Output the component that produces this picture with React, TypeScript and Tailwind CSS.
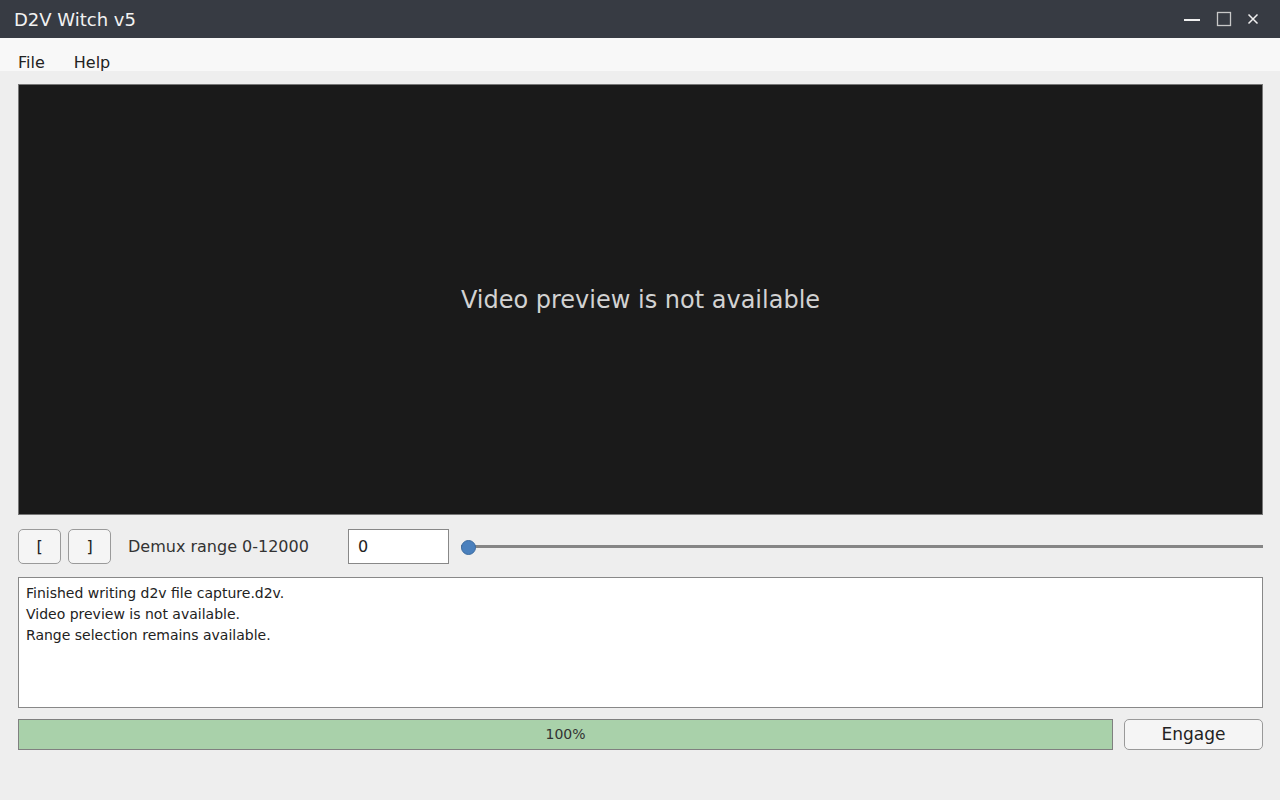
import React, { useState } from 'react';

const font = { fontFamily: '"DejaVu Sans", "Noto Sans", sans-serif' };

const TitleBar: React.FC = () => (
  <div className="h-[38px] bg-[#373b43] flex items-center justify-between pl-[14px] pr-[21px]">
    <span className="text-[18px] text-[#f2f2f2]">D2V Witch v5</span>
    <div className="flex items-center gap-[15px]">
      <svg width="18" height="18" viewBox="0 0 18 18">
        <line x1="1" y1="10" x2="17" y2="10" stroke="#f0f0f0" strokeWidth="2" />
      </svg>
      <svg width="16" height="16" viewBox="0 0 16 16">
        <rect x="1.5" y="1.5" width="13" height="13" fill="none" stroke="#c8c8c8" strokeWidth="1.3" />
      </svg>
      <svg width="12" height="12" viewBox="0 0 12 12">
        <path d="M1.5 1.5L10.5 10.5M10.5 1.5L1.5 10.5" stroke="#f0f0f0" strokeWidth="1.5" />
      </svg>
    </div>
  </div>
);

export default function App() {
  const [frame, setFrame] = useState('0');
  const [pos, setPos] = useState(0);

  return (
    <div className="w-[1280px] h-[800px] bg-[#eeeeee] flex flex-col overflow-hidden" style={font}>
      <TitleBar />

      <div className="h-[33px] bg-[#f8f8f8] flex items-end text-[16px] leading-[16px] text-[#222]">
        <span className="ml-[18px]">File</span>
        <span className="ml-[29px]">Help</span>
      </div>

      <div className="flex flex-col px-[18px] pt-[13px] pr-[17px]">
        <div className="h-[431px] bg-[#1a1a1a] border border-[#777] flex items-center justify-center">
          <span className="text-[24px] text-[#d2d2d2]">Video preview is not available</span>
        </div>

        <div className="flex items-center mt-[14px] h-[35px]">
          <button className="w-[43px] h-[35px] rounded-[5px] border border-[#9a9a9a] bg-[#f5f5f5] text-[16px] text-[#222]">[</button>
          <button className="w-[43px] h-[35px] ml-[7px] rounded-[5px] border border-[#9a9a9a] bg-[#f5f5f5] text-[16px] text-[#222]">]</button>
          <span className="ml-[17px] text-[16px] text-[#333]">Demux range 0-12000</span>
          <input
            value={frame}
            onChange={e => setFrame(e.target.value)}
            className="ml-[39px] w-[101px] h-[35px] border border-[#888] bg-white px-[9px] text-[16px] text-[#222] outline-none"
          />
          <div className="relative flex-1 ml-[12px] h-[20px] flex items-center">
            <div className="w-full h-[3px] bg-[#858585]" />
            <input
              type="range"
              min={0}
              max={12000}
              value={pos}
              onChange={e => setPos(Number(e.target.value))}
              className="absolute inset-0 opacity-0"
            />
            <div className="absolute left-0 top-[3px] w-[15px] h-[15px] rounded-full bg-[#4a80bd] border border-[#3a6a9f]" />
          </div>
        </div>

        <div className="mt-[13px] h-[131px] bg-white border border-[#888] px-[7px] pt-[5px] text-[14px] leading-[21px] text-[#222]">
          <div>Finished writing d2v file capture.d2v.</div>
          <div>Video preview is not available.</div>
          <div>Range selection remains available.</div>
        </div>

        <div className="flex mt-[11px] h-[31px] gap-[11px]">
          <div className="flex-1 bg-[#a9d1aa] border border-[#808080] flex items-center justify-center text-[14px] text-[#333]">100%</div>
          <button className="w-[139px] rounded-[5px] border border-[#999] bg-[#f5f5f5] text-[17px] text-[#222]">Engage</button>
        </div>
      </div>
    </div>
  );
}
